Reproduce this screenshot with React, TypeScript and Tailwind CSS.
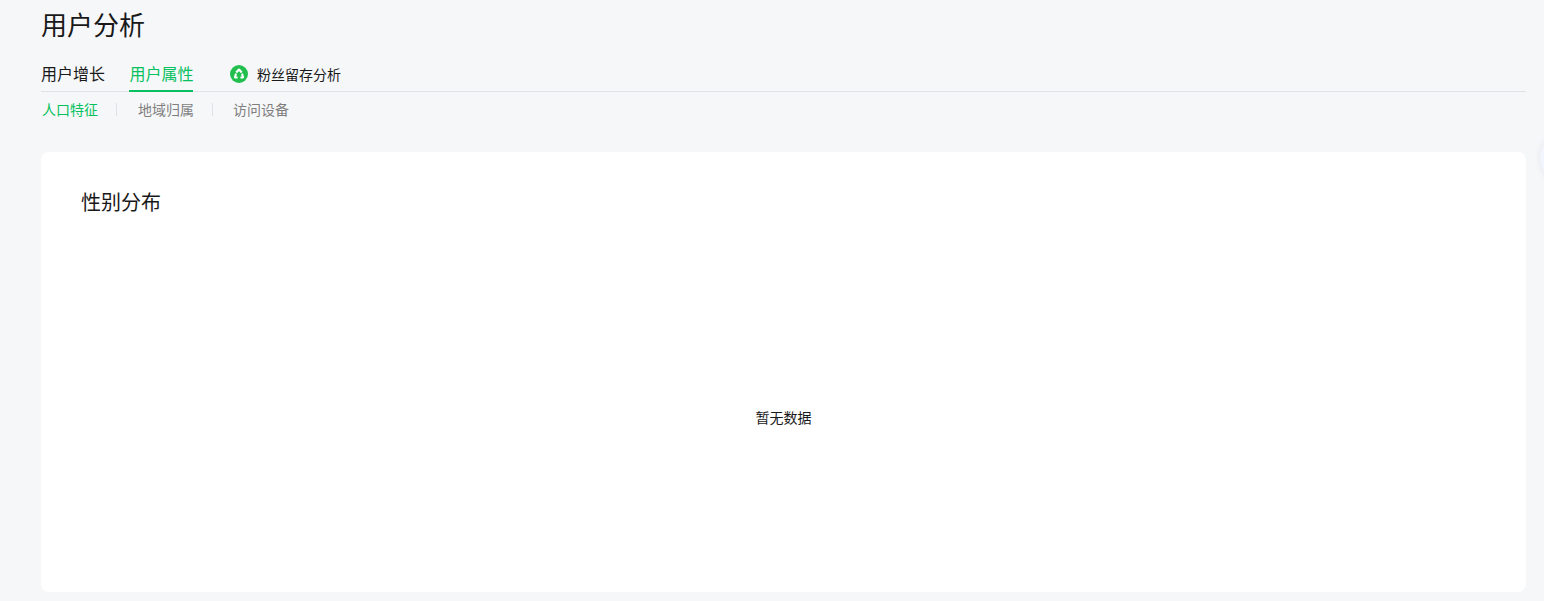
export default function App() {
  const font = { fontFamily: '"Noto Sans CJK SC", sans-serif' };
  return (
    <div style={font} className="relative h-[601px] w-full overflow-hidden bg-[#f6f7f9] pl-[41px] pr-[18px]">
      <h1 className="h-[50px] text-[26px] leading-[48px] font-normal text-[#191919]">用户分析</h1>
      <div className="flex h-[42px] items-start border-b border-[#e1e2e6]">
        <div className="flex h-[41px] w-[65px] items-center pt-[5px] text-[16px] whitespace-nowrap text-[#191919]">用户增长</div>
        <div className="ml-[23px] flex h-[42px] w-[64px] items-center justify-center border-b-2 border-[#07c160] pt-[5px] pl-px text-[16px] whitespace-nowrap text-[#07c160]">用户属性</div>
        <div className="ml-[37px] flex h-[41px] items-center pt-[7px] text-[14px] whitespace-nowrap text-[#191919]">
          <svg width="18" height="18" viewBox="0 0 18 18" className="mr-[9px]">
            <circle cx="9" cy="9" r="9" fill="#22bf4e" />
            <path d="M6.2 7.6 9 4.6 11.8 7.6" fill="none" stroke="#fff" strokeWidth="2.2" strokeLinejoin="round" />
            <path d="M6 8.6 4.9 12.4H7.6" fill="none" stroke="#fff" strokeWidth="2" strokeLinejoin="round" />
            <path d="M12 8.6 13.1 12.4H10.4" fill="none" stroke="#fff" strokeWidth="2" strokeLinejoin="round" />
          </svg>
          粉丝留存分析
        </div>
      </div>
      <div className="flex h-[35px] items-center pl-px text-[14px] whitespace-nowrap text-[#7f7f7f]">
        <span className="text-[#07c160]">人口特征</span>
        <span className="mx-[18px] h-[13px] w-px bg-[#e1e2e6]" />
        <span className="ml-[3px]">地域归属</span>
        <span className="mx-[18px] h-[13px] w-px bg-[#e1e2e6]" />
        <span className="ml-[2px]">访问设备</span>
      </div>
      <div className="mt-[25px] flex h-[440px] flex-col rounded-lg bg-white pr-[41px] pl-[40px] pt-[36px]">
        <h2 className="h-[30px] text-[20px] leading-[28px] font-normal text-[#191919]">性别分布</h2>
        <div className="flex flex-1 items-center justify-center pt-[24px] pl-px text-[14px] text-[#191919]">暂无数据</div>
      </div>
      <div className="absolute top-[133px] left-[1540px] h-[50px] w-[50px] rounded-full bg-[#f3f5fe] shadow-[0_0_6px_rgba(60,60,90,0.1)]" />
    </div>
  );
}
